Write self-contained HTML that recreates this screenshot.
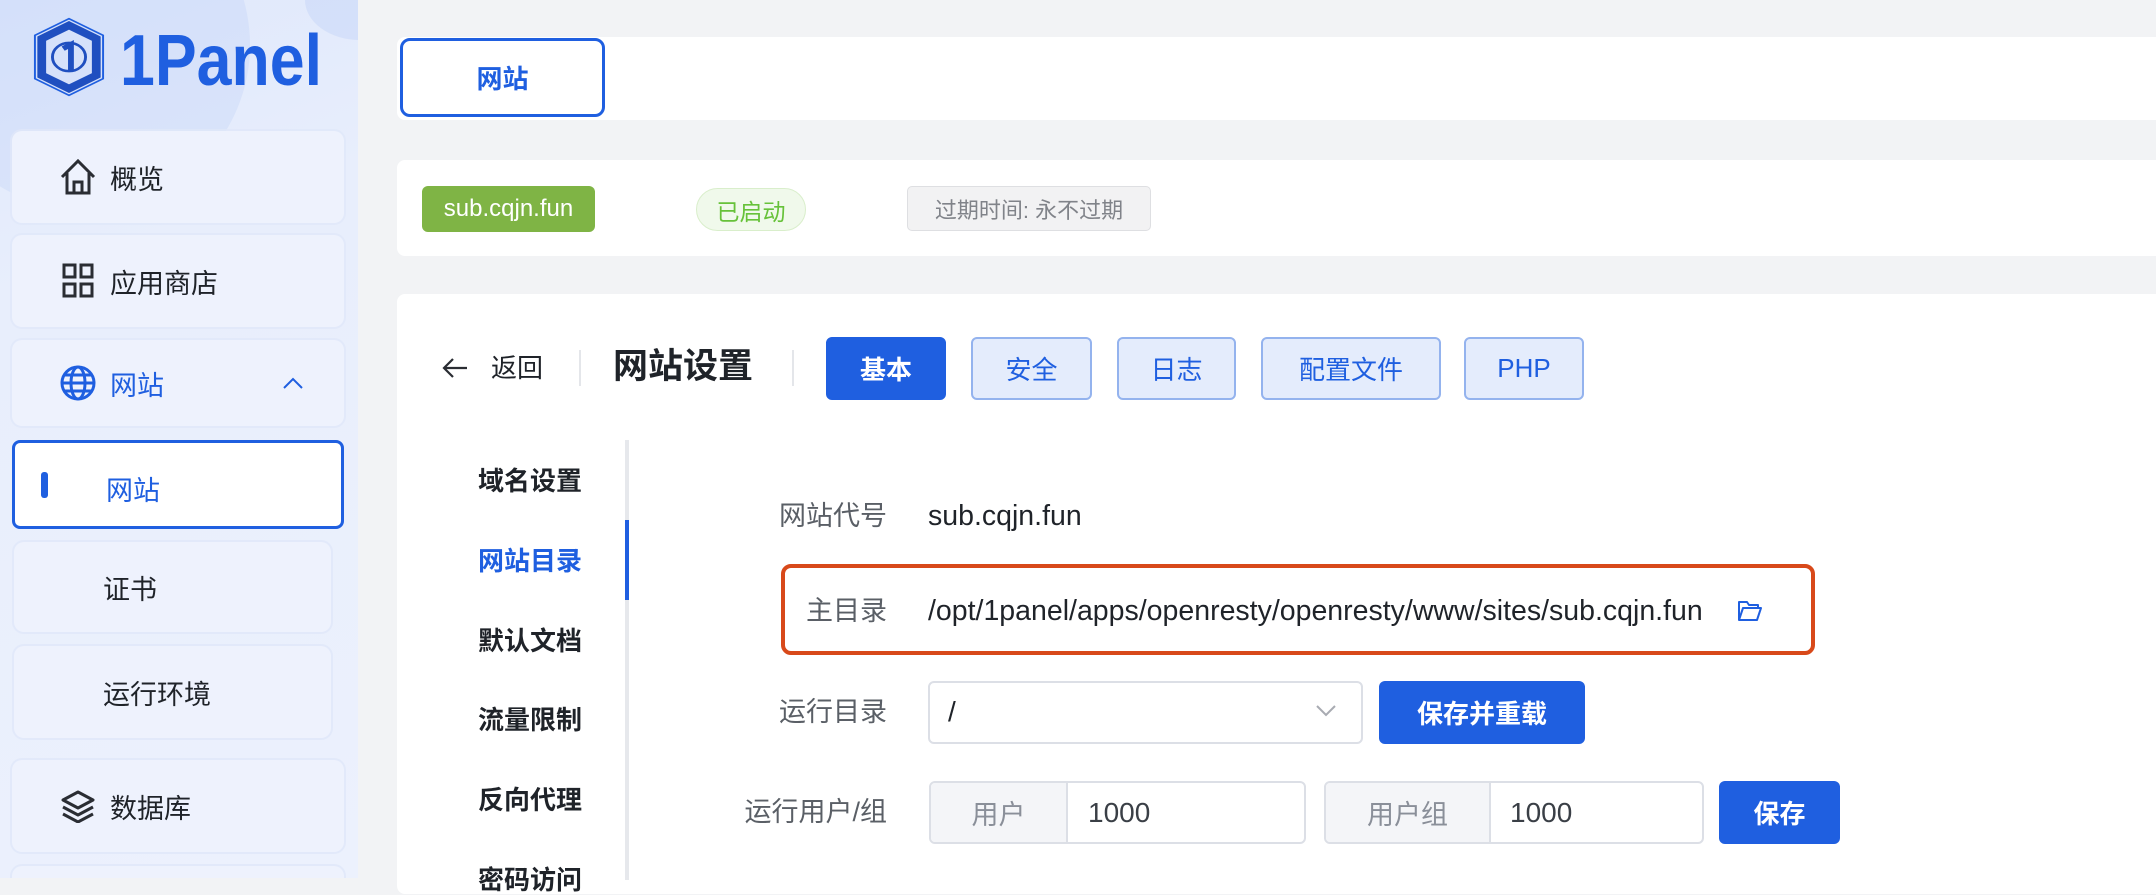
<!DOCTYPE html>
<html><head><meta charset="utf-8"><style>
*{box-sizing:border-box;margin:0;padding:0}
body{width:2156px;height:878px;overflow:hidden;background:#f2f3f5;font-family:"Liberation Sans","Noto Sans CJK SC",sans-serif;position:relative;color:#1f2329}
.abs{position:absolute}
#side{left:0;top:0;width:358px;height:878px;background:linear-gradient(160deg,#dfe8fb 0%,#e8eefc 30%,#ecf1fd 100%);overflow:hidden}
.mi{position:absolute;left:12px;width:332px;background:#eef2fd;border-radius:10px;box-shadow:0 0 0 2px rgba(224,231,249,.8);font-size:27px;display:flex;align-items:center}
.mi span{position:absolute;left:98px}
.mi svg{position:absolute;left:46px}
.card{position:absolute;left:397px;right:0;background:#fff;border-radius:8px 0 0 8px}
.btn{position:absolute;top:337px;height:63px;border-radius:6px;border:2px solid #94b3ee;background:#e4ecfc;color:#1f5fe0;font-size:26px;display:flex;align-items:center;justify-content:center}
.sub{position:absolute;left:478px;font-size:26px;font-weight:bold;color:#1f2329;line-height:30px}
.lbl{position:absolute;right:1269px;font-size:27px;color:#5a5f66;line-height:30px}
.val{position:absolute;left:928px;font-size:28.5px;color:#1f2329;line-height:30px}
.pb{position:absolute;background:#1f5fe0;color:#fff;border-radius:6px;font-size:26px;font-weight:bold;display:flex;align-items:center;justify-content:center}
.grp{position:absolute;top:781px;height:63px;border:2px solid #dcdfe6;border-radius:6px;background:#fff;font-size:27px;overflow:hidden}
.grp .pre{position:absolute;left:0;top:0;bottom:0;background:#f4f5f8;border-right:2px solid #dcdfe6;color:#8a8f99;display:flex;align-items:center;justify-content:center}
.grp .v{position:absolute;top:0;bottom:0;display:flex;align-items:center;color:#3a3f46;font-size:28px}
</style></head><body>
<div id="side" class="abs">
  <div class="abs" style="left:-80px;top:-120px;width:330px;height:330px;border-radius:50%;background:rgba(175,198,245,.22)"></div>
  <div class="abs" style="left:305px;top:-40px;width:110px;height:80px;border-radius:50%;background:rgba(180,200,245,.3)"></div>
  <svg class="abs" style="left:32px;top:17px" width="74" height="80" viewBox="0 0 76 96" preserveAspectRatio="none">
    <polygon points="38,2 73,22 73,74 38,94 3,74 3,22" fill="none" stroke="#1f5fe0" stroke-width="2"/>
    <polygon points="38,10 66,26 66,70 38,86 10,70 10,26" fill="none" stroke="#1f4fc0" stroke-width="9"/>
    <circle cx="38" cy="48" r="17" fill="none" stroke="#1f4fc0" stroke-width="3"/>
    <path d="M32 38 L40 33 L40 64" fill="none" stroke="#1f4fc0" stroke-width="6"/>
  </svg>
  <svg class="abs" style="left:118px;top:20px" width="210" height="70"><text x="2" y="65" font-family="Liberation Sans" font-weight="bold" font-size="72" fill="#1f5fe0" textLength="202" lengthAdjust="spacingAndGlyphs">1Panel</text></svg>
  <div class="mi" style="top:131px;height:92px"><svg width="40" height="40" viewBox="0 0 40 40"><path d="M4 20 L20 4 L36 20 M9 16 V36 H31 V16 M16 36 V25 H24 V36" fill="none" stroke="#2a2d33" stroke-width="3"/></svg><span>概览</span></div>
  <div class="mi" style="top:235px;height:92px"><svg width="32" height="36" viewBox="0 0 32 36" style="left:50px"><g fill="none" stroke="#2a2d33" stroke-width="3"><rect x="2" y="2" width="11" height="12"/><rect x="19" y="2" width="11" height="12"/><rect x="2" y="21" width="11" height="12"/><rect x="19" y="21" width="11" height="12"/></g></svg><span>应用商店</span></div>
  <div class="mi" style="top:340px;height:86px;color:#1f5fe0"><svg width="38" height="38" viewBox="0 0 38 38" style="left:47px"><g fill="none" stroke="#1f5fe0" stroke-width="3"><circle cx="19" cy="19" r="16"/><ellipse cx="19" cy="19" rx="7" ry="16"/><path d="M3 19 H35 M6 11 H32 M6 27 H32"/></g></svg><span>网站</span><svg width="22" height="14" viewBox="0 0 22 14" style="left:270px"><path d="M2 12 L11 3 L20 12" fill="none" stroke="#1f5fe0" stroke-width="2"/></svg></div>
  <div class="abs" style="left:12px;top:440px;width:332px;height:89px;background:#fff;border:3px solid #1f5fe0;border-radius:8px"></div>
  <div class="abs" style="left:41px;top:472px;width:7px;height:26px;background:#1f5fe0;border-radius:3px"></div>
  <div class="abs" style="left:106px;top:469px;font-size:27px;color:#1f5fe0">网站</div>
  <div class="mi" style="top:542px;height:90px;width:317px;left:14px"><span style="left:89px">证书</span></div>
  <div class="mi" style="top:646px;height:92px;width:317px;left:14px"><span style="left:89px">运行环境</span></div>
  <div class="mi" style="top:760px;height:92px"><svg width="36" height="34" viewBox="0 0 36 34" style="left:48px"><g fill="none" stroke="#2a2d33" stroke-width="3" stroke-linejoin="round"><path d="M18 3 L33 11 L18 19 L3 11 Z"/><path d="M3 18 L18 26 L33 18"/><path d="M3 25 L18 33 L33 25"/></g></svg><span>数据库</span></div>
  <div class="mi" style="top:866px;height:40px"></div>
</div>

<div class="card" style="top:37px;height:83px"></div>
<div class="abs" style="left:400px;top:38px;width:205px;height:79px;border:3px solid #1f5fe0;border-radius:10px;background:#fff;color:#1f5fe0;font-size:26px;font-weight:bold;display:flex;align-items:center;justify-content:center">网站</div>

<div class="card" style="top:160px;height:96px"></div>
<div class="abs" style="left:422px;top:186px;width:173px;height:46px;background:#7fb445;border-radius:6px;color:#fff;font-size:24px;display:flex;align-items:center;justify-content:center">sub.cqjn.fun</div>
<div class="abs" style="left:696px;top:188px;width:110px;height:43px;background:#f0f9eb;border:1px solid #d9eecb;border-radius:22px;color:#67c23a;font-size:23px;display:flex;align-items:center;justify-content:center">已启动</div>
<div class="abs" style="left:907px;top:186px;width:244px;height:45px;background:#f2f2f3;border:1px solid #dedfe2;border-radius:5px;color:#808389;font-size:22px;display:flex;align-items:center;justify-content:center">过期时间: 永不过期</div>

<div class="card" style="top:294px;height:600px"></div>
<svg class="abs" style="left:441px;top:356px" width="28" height="24" viewBox="0 0 28 24"><path d="M26 12 H3 M12 3 L3 12 L12 21" fill="none" stroke="#2a2d33" stroke-width="2.2"/></svg>
<div class="abs" style="left:491px;top:353px;font-size:26px;line-height:30px">返回</div>
<div class="abs" style="left:579px;top:350px;width:2px;height:36px;background:#e4e6ea"></div>
<div class="abs" style="left:613px;top:346px;font-size:35px;font-weight:bold;line-height:42px">网站设置</div>
<div class="abs" style="left:792px;top:350px;width:2px;height:36px;background:#e4e6ea"></div>
<div class="btn" style="left:826px;width:120px;background:#1f5fe0;border-color:#1f5fe0;color:#fff;font-weight:bold">基本</div>
<div class="btn" style="left:971px;width:121px">安全</div>
<div class="btn" style="left:1117px;width:119px">日志</div>
<div class="btn" style="left:1261px;width:180px">配置文件</div>
<div class="btn" style="left:1464px;width:120px">PHP</div>

<div class="abs" style="left:625px;top:440px;width:4px;height:440px;background:#e6e8ec"></div>
<div class="abs" style="left:625px;top:520px;width:4px;height:80px;background:#1f5fe0"></div>
<div class="sub" style="top:466px">域名设置</div>
<div class="sub" style="top:546px;color:#1f5fe0">网站目录</div>
<div class="sub" style="top:626px">默认文档</div>
<div class="sub" style="top:705px">流量限制</div>
<div class="sub" style="top:785px">反向代理</div>
<div class="sub" style="top:865px">密码访问</div>

<div class="lbl" style="top:501px">网站代号</div>
<div class="val" style="top:501px">sub.cqjn.fun</div>
<div class="abs" style="left:781px;top:564px;width:1034px;height:91px;border:4px solid #d8491a;border-radius:10px"></div>
<div class="lbl" style="top:596px">主目录</div>
<div class="val" style="top:596px">/opt/1panel/apps/openresty/openresty/www/sites/sub.cqjn.fun</div>
<svg class="abs" style="left:1737px;top:600px" width="26" height="22" viewBox="0 0 26 22"><path d="M2 20 V2 H10 L12 5 H21 V8 M2 20 L6 8 H24 L20 20 Z" fill="none" stroke="#1f5fe0" stroke-width="2" stroke-linejoin="round"/></svg>
<div class="lbl" style="top:697px">运行目录</div>
<div class="abs" style="left:928px;top:681px;width:435px;height:63px;border:2px solid #dcdfe6;border-radius:6px;background:#fff"></div>
<div class="abs" style="left:948px;top:697px;font-size:28px;line-height:30px">/</div>
<svg class="abs" style="left:1315px;top:704px" width="22" height="14" viewBox="0 0 22 14"><path d="M2 2 L11 11 L20 2" fill="none" stroke="#a8abb2" stroke-width="2"/></svg>
<div class="pb" style="left:1379px;top:681px;width:206px;height:63px">保存并重载</div>
<div class="lbl" style="top:797px">运行用户/组</div>
<div class="grp" style="left:929px;width:377px"><div class="pre" style="width:137px">用户</div><div class="v" style="left:157px">1000</div></div>
<div class="grp" style="left:1324px;width:380px"><div class="pre" style="width:165px">用户组</div><div class="v" style="left:184px">1000</div></div>
<div class="pb" style="left:1719px;top:781px;width:121px;height:63px">保存</div>
</body></html>
